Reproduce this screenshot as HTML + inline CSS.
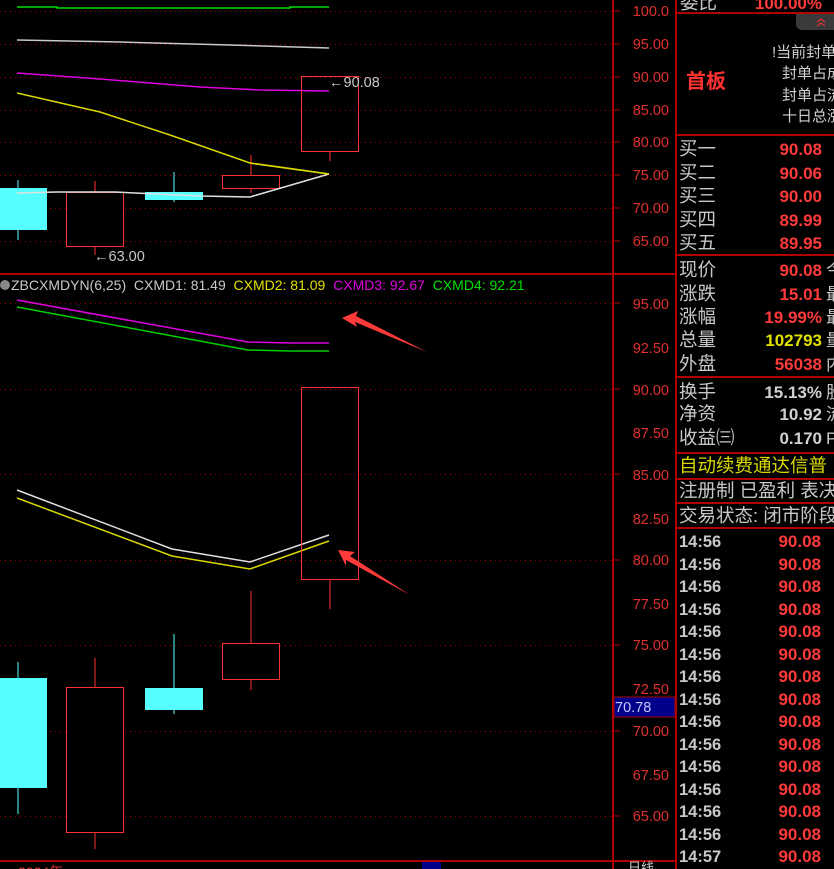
<!DOCTYPE html>
<html><head><meta charset="utf-8"><style>
html,body{margin:0;padding:0;background:#000;width:834px;height:869px;overflow:hidden}
svg{display:block}
.ax{font-family:"Liberation Sans",sans-serif;font-size:14.5px;fill:#e03030}
.lb{font-family:"Liberation Sans","Noto Sans CJK SC",sans-serif;font-size:18.5px;fill:#c8c8c8}
.v{font-family:"Liberation Sans",sans-serif;font-size:17px;font-weight:bold;fill:#ff3a3a}
.t{font-family:"Liberation Sans",sans-serif;font-size:16.5px;font-weight:bold;fill:#c8c8c8}
</style></head><body>
<svg width="834" height="869" xmlns="http://www.w3.org/2000/svg">
<g stroke="#900" stroke-width="1" stroke-dasharray="1,4">
<line x1="0" y1="11.5" x2="612" y2="11.5"/><line x1="0" y1="44.5" x2="612" y2="44.5"/>
<line x1="0" y1="77.5" x2="612" y2="77.5"/><line x1="0" y1="110.5" x2="612" y2="110.5"/>
<line x1="0" y1="142.5" x2="612" y2="142.5"/><line x1="0" y1="175.5" x2="612" y2="175.5"/>
<line x1="0" y1="208.5" x2="612" y2="208.5"/><line x1="0" y1="241.5" x2="612" y2="241.5"/>
<line x1="0" y1="303.5" x2="612" y2="303.5"/><line x1="0" y1="389.5" x2="612" y2="389.5"/>
<line x1="0" y1="474.5" x2="612" y2="474.5"/><line x1="0" y1="560.5" x2="612" y2="560.5"/>
<line x1="0" y1="645.5" x2="612" y2="645.5"/><line x1="0" y1="731.5" x2="612" y2="731.5"/>
<line x1="0" y1="816.5" x2="612" y2="816.5"/>
</g>
<g stroke="#b00000" stroke-width="2" fill="none">
<line x1="0" y1="274" x2="676" y2="274"/>
<line x1="0" y1="861" x2="676" y2="861"/>
<line x1="613" y1="0" x2="613" y2="869"/>
<line x1="676" y1="0" x2="676" y2="869"/>
<line x1="676" y1="13" x2="834" y2="13"/>
<line x1="676" y1="135" x2="834" y2="135"/>
<line x1="676" y1="255" x2="834" y2="255"/>
<line x1="676" y1="377" x2="834" y2="377"/>
<line x1="676" y1="453" x2="834" y2="453"/>
<line x1="676" y1="479" x2="834" y2="479"/>
<line x1="676" y1="503" x2="834" y2="503"/>
<line x1="676" y1="528" x2="834" y2="528"/>
</g>
<g stroke="#b00000" stroke-width="1">
<line x1="613" y1="11" x2="620" y2="11"/><line x1="613" y1="44" x2="620" y2="44"/><line x1="613" y1="77" x2="620" y2="77"/><line x1="613" y1="110" x2="620" y2="110"/><line x1="613" y1="142" x2="620" y2="142"/><line x1="613" y1="175" x2="620" y2="175"/><line x1="613" y1="208" x2="620" y2="208"/><line x1="613" y1="241" x2="620" y2="241"/>
<line x1="613" y1="303" x2="620" y2="303"/><line x1="613" y1="389" x2="620" y2="389"/><line x1="613" y1="474" x2="620" y2="474"/><line x1="613" y1="560" x2="620" y2="560"/><line x1="613" y1="645" x2="620" y2="645"/><line x1="613" y1="731" x2="620" y2="731"/><line x1="613" y1="816" x2="620" y2="816"/>
</g>
<g class="ax" text-anchor="end">
<text x="669" y="16">100.0</text><text x="669" y="49">95.00</text><text x="669" y="82">90.00</text><text x="669" y="115">85.00</text><text x="669" y="147">80.00</text><text x="669" y="180">75.00</text><text x="669" y="213">70.00</text><text x="669" y="246">65.00</text>
<text x="669" y="309">95.00</text><text x="669" y="353">92.50</text><text x="669" y="395">90.00</text><text x="669" y="438">87.50</text><text x="669" y="480">85.00</text><text x="669" y="524">82.50</text><text x="669" y="565">80.00</text><text x="669" y="609">77.50</text><text x="669" y="650">75.00</text><text x="669" y="694">72.50</text><text x="669" y="736">70.00</text><text x="669" y="780">67.50</text><text x="669" y="821">65.00</text>
</g>
<rect x="614" y="697" width="61" height="20" fill="#00008b" stroke="#b00000"/>
<text x="615" y="712" font-family="Liberation Sans" font-size="14.5" fill="#c8c8ff">70.78</text>
<text x="628" y="872" font-family="Liberation Sans,Noto Sans CJK SC" font-size="13" fill="#ccc">日线</text>

<g fill="none" stroke-width="1.5">
<polyline stroke="#00e000" points="17,7 57,7 57,8 290,8 290,7 329,7"/>
<polyline stroke="#c8c8c8" points="17,40 120,42 230,45 329,48"/>
<polyline stroke="#e000e0" points="17,73 100,79 200,87 260,90 329,91"/>
<polyline stroke="#d8d800" points="17,93 100,112 170,135 250,163 329,174"/>
</g>
<rect x="0" y="188" width="47" height="42" fill="#55ffff"/><line x1="18" y1="180" x2="18" y2="240" stroke="#55ffff"/>
<line x1="95" y1="181" x2="95" y2="255" stroke="#ff3030"/><rect x="66.5" y="192.5" width="57" height="54" fill="#000" stroke="#ff3030"/>
<line x1="174" y1="172" x2="174" y2="202" stroke="#55ffff"/><rect x="145" y="192" width="58" height="8" fill="#55ffff"/>
<line x1="251" y1="155" x2="251" y2="193" stroke="#ff3030"/><rect x="222.5" y="175.5" width="57" height="13" fill="#000" stroke="#ff3030"/>
<line x1="330" y1="151" x2="330" y2="161" stroke="#ff3030"/><rect x="301.5" y="76.5" width="57" height="75" fill="none" stroke="#ff3030"/>
<polyline points="17,193 57,192 115,192 200,196 250,197 329,174" fill="none" stroke="#e0e0e0" stroke-width="1.5"/>
<polyline points="250,163 329,174" fill="none" stroke="#d8d800" stroke-width="1.5"/>
<text x="94" y="261" font-family="Liberation Sans" font-size="14.5" fill="#c8c8c8">←63.00</text>
<text x="329" y="87" font-family="Liberation Sans" font-size="14.5" fill="#c8c8c8">←90.08</text>

<circle cx="5" cy="285" r="5" fill="#888"/>
<text y="290" font-family="Liberation Sans" font-size="14" xml:space="preserve"><tspan x="11" fill="#c8c8c8">ZBCXMDYN(6,25)  CXMD1: 81.49 </tspan><tspan fill="#e0e000"> CXMD2: 81.09 </tspan><tspan fill="#e000e0"> CXMD3: 92.67 </tspan><tspan fill="#00e000"> CXMD4: 92.21</tspan></text>

<g fill="none" stroke-width="1.5">
<polyline stroke="#e000e0" points="17,300 248,342 290,343 329,343"/>
<polyline stroke="#00d000" points="17,307 248,350 290,351 329,351"/>
<polyline stroke="#e0e0e0" points="17,490 172,549 250,562 329,535"/>
<polyline stroke="#d8d800" points="17,498 172,556 250,569 329,541"/>
</g>
<line x1="18" y1="662" x2="18" y2="814" stroke="#55ffff"/><rect x="0" y="678" width="47" height="110" fill="#55ffff"/>
<line x1="95" y1="658" x2="95" y2="849" stroke="#ff3030"/><rect x="66.5" y="687.5" width="57" height="145" fill="#000" stroke="#ff3030"/>
<line x1="174" y1="634" x2="174" y2="714" stroke="#55ffff"/><rect x="145" y="688" width="58" height="22" fill="#55ffff"/>
<line x1="251" y1="591" x2="251" y2="690" stroke="#ff3030"/><rect x="222.5" y="643.5" width="57" height="36" fill="#000" stroke="#ff3030"/>
<line x1="330" y1="579" x2="330" y2="609" stroke="#ff3030"/><rect x="301.5" y="387.5" width="57" height="192" fill="none" stroke="#ff3030"/>
<polygon points="342,318 358,311 356,316 427,352 355,322 357,327" fill="#ff3a3a"/>
<polygon points="338,550 355,552 350,556 410,595 346,560 346,566" fill="#ff3a3a"/>

<text x="18" y="877" font-family="Liberation Sans,Noto Sans CJK SC" font-size="14" fill="#e03030">2024年</text>
<rect x="422" y="862" width="19" height="7" fill="#00008b"/>

<text x="680" y="9" class="lb">委比</text>
<text x="822" y="9" class="v" text-anchor="end">100.00%</text>
<path d="M796,14 h38 v16 h-32 a6,6 0 0 1 -6,-6 z" fill="#3a3a3a"/>
<path d="M817,22 l4,-3 l4,3 M817,26 l4,-3 l4,3" stroke="#e03030" fill="none" stroke-width="1.2"/>
<text x="686" y="88" font-family="Liberation Sans,Noto Sans CJK SC" font-size="20" font-weight="bold" fill="#ff3030">首板</text>
<g font-family="Liberation Sans,Noto Sans CJK SC" font-size="15" fill="#d0d0d0">
<text x="772" y="57">!当前封单</text><text x="782" y="78">封单占成</text><text x="782" y="100">封单占流</text><text x="782" y="121">十日总涨</text>
</g>
<g class="lb">
<text x="679" y="155">买一</text><text x="679" y="179">买二</text><text x="679" y="202">买三</text><text x="679" y="226">买四</text><text x="679" y="249">买五</text>
<text x="679" y="276">现价</text><text x="679" y="300">涨跌</text><text x="679" y="323">涨幅</text><text x="679" y="346">总量</text><text x="679" y="370">外盘</text>
<text x="679" y="398">换手</text><text x="679" y="420">净资</text><text x="679" y="444">收益㈢</text>
<text x="679" y="472" style="fill:#d8d800">自动续费通达信普</text>
<text x="679" y="497">注册制 已盈利 表决</text>
<text x="679" y="522">交易状态: 闭市阶段</text>
</g>
<g class="v" text-anchor="end">
<text x="822" y="155">90.08</text><text x="822" y="179">90.06</text><text x="822" y="202">90.00</text><text x="822" y="226">89.99</text><text x="822" y="249">89.95</text>
<text x="822" y="276">90.08</text><text x="822" y="300">15.01</text><text x="822" y="323">19.99%</text><text x="822" y="346" style="fill:#e0e000">102793</text><text x="822" y="370">56038</text>
<text x="822" y="398" style="fill:#d0d0d0">15.13%</text><text x="822" y="420" style="fill:#d0d0d0">10.92</text><text x="822" y="444" style="fill:#d0d0d0">0.170</text>
</g>
<g class="lb" style="font-size:17px">
<text x="826" y="276">今</text><text x="826" y="300">最</text><text x="826" y="323">最</text><text x="826" y="346">量</text><text x="826" y="370">内</text><text x="826" y="398">股</text><text x="826" y="420">流</text><text x="826" y="444">P</text>
</g>
<g class="t">
<text x="679" y="547">14:56</text><text x="679" y="570">14:56</text><text x="679" y="592">14:56</text><text x="679" y="615">14:56</text><text x="679" y="637">14:56</text><text x="679" y="660">14:56</text><text x="679" y="682">14:56</text><text x="679" y="705">14:56</text><text x="679" y="727">14:56</text><text x="679" y="750">14:56</text><text x="679" y="772">14:56</text><text x="679" y="795">14:56</text><text x="679" y="817">14:56</text><text x="679" y="840">14:56</text><text x="679" y="862">14:57</text>
</g>
<g class="v" text-anchor="end">
<text x="821" y="547">90.08</text><text x="821" y="570">90.08</text><text x="821" y="592">90.08</text><text x="821" y="615">90.08</text><text x="821" y="637">90.08</text><text x="821" y="660">90.08</text><text x="821" y="682">90.08</text><text x="821" y="705">90.08</text><text x="821" y="727">90.08</text><text x="821" y="750">90.08</text><text x="821" y="772">90.08</text><text x="821" y="795">90.08</text><text x="821" y="817">90.08</text><text x="821" y="840">90.08</text><text x="821" y="862">90.08</text>
</g>
</svg>
</body></html>
